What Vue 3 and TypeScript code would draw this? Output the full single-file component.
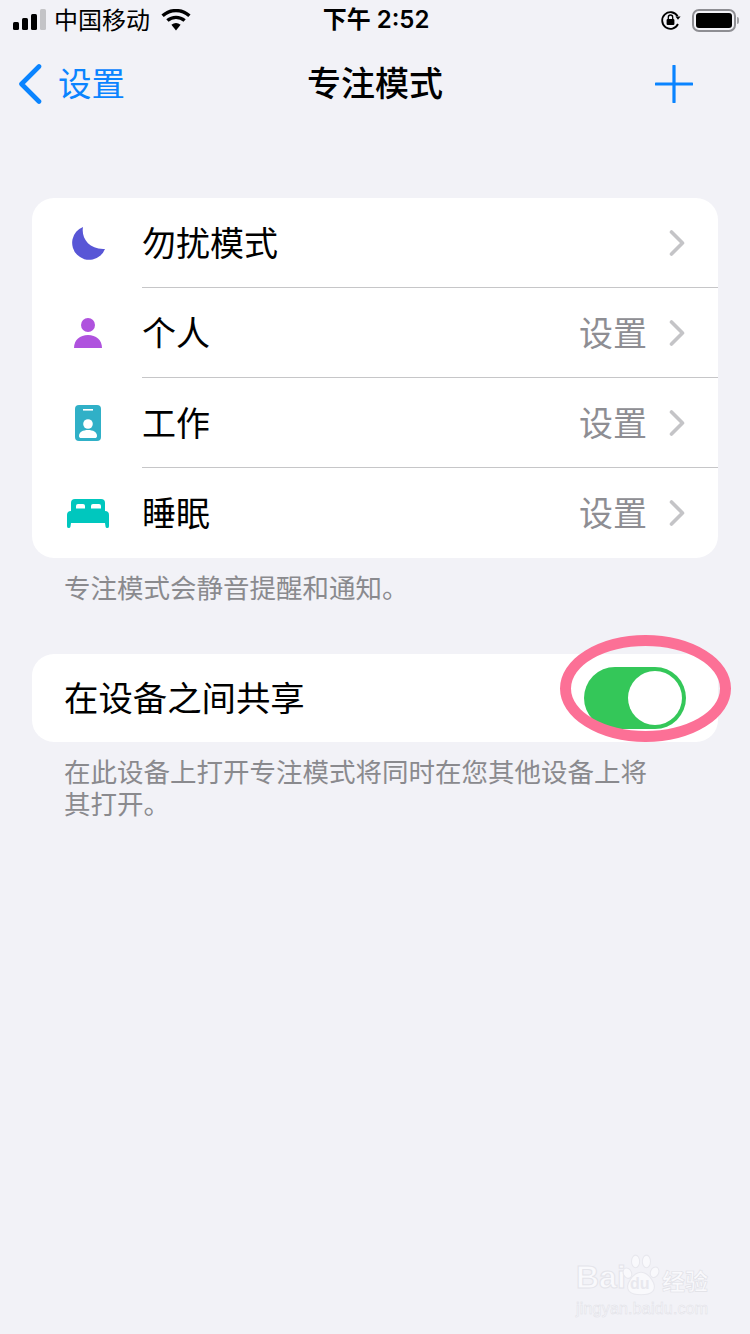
<script setup lang="ts">
interface Focus {
  key: string
  label: string
  value?: string
}

const focusModes: Focus[] = [
  { key: 'moon', label: '勿扰模式' },
  { key: 'person', label: '个人', value: '设置' },
  { key: 'badge', label: '工作', value: '设置' },
  { key: 'bed', label: '睡眠', value: '设置' }
]
</script>

<template>
  <div class="page">
    <header class="status">
      <div class="status-left">
        <svg class="signal" width="33" height="22" viewBox="0 0 33 22">
          <rect x="0" y="13" width="6" height="8" rx="1.5" fill="#000" />
          <rect x="9" y="9" width="6" height="12" rx="1.5" fill="#000" />
          <rect x="18" y="5" width="6" height="16" rx="1.5" fill="#000" />
          <rect x="27" y="0" width="6" height="21" rx="1.5" fill="#c4c4c7" />
        </svg>
        <span class="carrier">中国移动</span>
        <svg class="wifi" width="30" height="22" viewBox="0 0 30 22">
          <path d="M15 21.5 10.4 15.8A7.5 7.5 0 0 1 19.6 15.8Z" fill="#000" />
          <path d="M6.4 11.6A13 13 0 0 1 23.6 11.6" fill="none" stroke="#000" stroke-width="3.4" />
          <path d="M1.6 6.8A19.8 19.8 0 0 1 28.4 6.8" fill="none" stroke="#000" stroke-width="3.4" />
        </svg>
      </div>
      <span class="time">下午 2:52</span>
      <div class="status-right">
        <svg width="22" height="22" viewBox="0 0 22 22">
          <path d="M17.6 7.2A8.3 8.3 0 1 0 18 15" fill="none" stroke="#000" stroke-width="1.8" />
          <path d="M15.4 7.4h5.2l-2.6 3.4Z" fill="#000" />
          <rect x="6.6" y="10" width="7.8" height="6" rx="1" fill="#000" />
          <path d="M8.3 10V8.2a2.2 2.2 0 0 1 4.4 0V10" fill="none" stroke="#000" stroke-width="1.3" />
        </svg>
        <div class="battery">
          <div class="battery-fill"></div>
        </div>
        <div class="battery-tip"></div>
      </div>
    </header>

    <nav class="nav">
      <div class="back">
        <svg width="24" height="40" viewBox="0 0 24 40">
          <path d="M21 2.500 3.500 20 21 37.500" fill="none" stroke="#0a84ff" stroke-width="4.6" stroke-linecap="round" stroke-linejoin="round" />
        </svg>
        <span>设置</span>
      </div>
      <h1 class="title">专注模式</h1>
      <div class="add">
        <svg width="38" height="38" viewBox="0 0 38 38">
          <path d="M19 1V37M1 19H37" stroke="#0a84ff" stroke-width="3.2" stroke-linecap="round" />
        </svg>
      </div>
    </nav>

    <main class="content">
      <section class="card">
        <div v-for="(mode, i) in focusModes" :key="mode.key" class="row">
          <div class="icon">
            <svg width="60" height="60" viewBox="0 0 60 60">
              <path v-if="mode.key === 'moon'" d="M25 14C23 25 31 37 47 36A17 17 0 1 1 25 14Z" fill="#5856d6" />
              <g v-else-if="mode.key === 'person'" fill="#af52de">
                <circle cx="30" cy="22" r="7" />
                <path d="M16 45C16 37 22 32 30 32 38 32 44 37 44 45Z" />
              </g>
              <g v-else-if="mode.key === 'badge'">
                <rect x="17" y="12" width="26" height="36" rx="4" fill="#30b0c7" />
                <rect x="25" y="16" width="10" height="1.6" fill="#fff" />
                <circle cx="30" cy="31" r="4.800" fill="#fff" />
                <path d="M21 43C21 39 25 37 30 37 35 37 39 39 39 43 39 44.500 38 45 37 45H23C22 45 21 44.500 21 43Z" fill="#fff" />
              </g>
              <g v-else>
                <path d="M13 30V20a4 4 0 0 1 4-4H43a4 4 0 0 1 4 4V30Z" fill="#00c7be" />
                <path d="M18 25.500V23a2 2 0 0 1 2-2H25a2 2 0 0 1 2 2V25.500ZM33 25.500V23a2 2 0 0 1 2-2H41a2 2 0 0 1 2 2V25.500Z" fill="#fff" />
                <path d="M9 43a1 1 0 0 0 3.500 .5L13 40H47L47.500 43.500A1 1 0 0 0 51 43V32a4 4 0 0 0-4-4H13a4 4 0 0 0-4 4Z" fill="#00c7be" />
              </g>
            </svg>
          </div>
          <div class="row-main" :class="{ last: i === focusModes.length - 1 }">
            <span class="label">{{ mode.label }}</span>
            <span v-if="mode.value" class="value">{{ mode.value }}</span>
            <svg class="chevron" width="16" height="26" viewBox="0 0 16 26">
              <path d="M2.500 2 13.500 13 2.500 24" fill="none" stroke="#c4c4c7" stroke-width="3.6" stroke-linecap="round" stroke-linejoin="round" />
            </svg>
          </div>
        </div>
      </section>
      <p class="note">专注模式会静音提醒和通知。</p>

      <section class="card share">
        <span class="label">在设备之间共享</span>
        <div class="toggle">
          <div class="knob"></div>
        </div>
      </section>
      <p class="note note-wide">在此设备上打开专注模式将同时在您其他设备上将其打开。</p>
    </main>

    <div class="circle-mark"></div>

    <div class="watermark">
      <div class="wm-top">
        <span class="wm-bai">Bai</span>
        <div class="wm-paw">
          <svg width="38" height="44" viewBox="0 0 42 46">
            <g fill="#f9f9fc" stroke="#e8e8ee" stroke-width="1.200">
              <ellipse cx="6" cy="21" rx="4.500" ry="6" transform="rotate(-25 6 21)" />
              <ellipse cx="15" cy="8" rx="4.500" ry="7" />
              <ellipse cx="27" cy="8" rx="4.500" ry="7" />
              <ellipse cx="36" cy="20" rx="4.500" ry="6" transform="rotate(25 36 20)" />
              <path d="M21 20C29 20 40 34 34 41 29 46 13 46 8 41 2 34 13 20 21 20Z" />
            </g>
          </svg>
          <span class="wm-du">du</span>
        </div>
        <span class="wm-cn">经验</span>
      </div>
      <span class="wm-url">jingyan.baidu.com</span>
    </div>
  </div>
</template>

<style scoped>
.page {
  position: relative;
  width: 750px;
  height: 1334px;
  overflow: hidden;
  background: #f2f2f7;
  color: #000;
  font-family: "Noto Sans CJK SC", "Liberation Sans", sans-serif;
}

.status {
  display: grid;
  grid-template-columns: 1fr auto 1fr;
  align-items: center;
  height: 40px;
  padding: 0 11px 0 13px;
}
.status-left {
  display: flex;
  align-items: center;
}
.signal {
  margin-right: 8px;
}
.carrier {
  margin-bottom: 2px;
  font-size: 24px;
  line-height: 38px;
}
.wifi {
  margin-left: 11px;
}
.time {
  font-family: Inter, "Noto Sans CJK SC", sans-serif;
  font-size: 24px;
  font-weight: 600;
  line-height: 40px;
}
.status-right {
  display: flex;
  align-items: center;
  justify-content: flex-end;
}
.battery {
  margin-left: 10px;
  width: 44px;
  height: 23px;
  padding: 2px;
  box-sizing: border-box;
  border: 2px solid #8e8e93;
  border-radius: 7px;
}
.battery-fill {
  width: 100%;
  height: 100%;
  background: #000;
  border-radius: 3px;
}
.battery-tip {
  width: 2px;
  height: 7px;
  margin-left: 1px;
  background: #a0a0a4;
  border-radius: 0 2px 2px 0;
}

.nav {
  display: grid;
  grid-template-columns: 1fr auto 1fr;
  align-items: center;
  height: 88px;
  padding: 0 18px;
}
.back {
  display: flex;
  align-items: center;
  gap: 16px;
  color: #0a84ff;
  font-size: 33.500px;
  line-height: 40px;
}
.back span {
  margin-bottom: 4px;
}
.title {
  margin: 0 0 4px;
  font-size: 34px;
  font-weight: 500;
  line-height: 40px;
}
.add {
  display: flex;
  justify-content: flex-end;
  padding-right: 39px;
}

.content {
  padding: 70px 32px 0;
}
.card {
  background: #fff;
  border-radius: 22px;
  overflow: hidden;
}
.row {
  display: flex;
  height: 90px;
}
.icon {
  flex: 0 0 110px;
  display: flex;
  align-items: center;
  padding-left: 26px;
  box-sizing: border-box;
}
.row-main {
  flex: 1;
  display: flex;
  align-items: center;
  padding-right: 33px;
  border-bottom: 1px solid #c6c6c8;
}
.row-main.last {
  border-bottom: none;
}
.label {
  flex: 1;
  margin-bottom: 2px;
  font-size: 34px;
  line-height: 44px;
}
.value {
  margin: 0 22px 2px 0;
  color: #8e8e93;
  font-size: 34px;
  line-height: 44px;
}
.note {
  margin: 13px 0 51px;
  padding-left: 32px;
  width: 600px;
  color: #8a8a8e;
  font-size: 26.500px;
  line-height: 32px;
}
.note-wide {
  margin-top: 13px;
}
.share {
  display: flex;
  align-items: center;
  height: 88px;
  padding: 0 32px;
}
.share .label {
  margin-bottom: 4px;
  font-size: 34.400px;
}
.toggle {
  width: 102px;
  height: 62px;
  padding: 4px;
  box-sizing: border-box;
  display: flex;
  justify-content: flex-end;
  background: #34c759;
  border-radius: 31px;
}
.knob {
  width: 54px;
  height: 54px;
  background: #fff;
  border-radius: 50%;
}

/* hand-drawn annotation over the toggle */
.circle-mark {
  position: absolute;
  left: 560px;
  top: 635px;
  width: 171px;
  height: 107px;
  box-sizing: border-box;
  border: 11px solid #fc7096;
  border-radius: 50%;
}

.watermark {
  position: absolute;
  left: 576px;
  top: 1253px;
  width: 134px;
  display: flex;
  flex-direction: column;
}
.wm-top {
  display: flex;
  align-items: flex-end;
  height: 46px;
}
.wm-bai {
  width: 46px;
  color: #f9f9fc;
  font-family: "Liberation Sans", sans-serif;
  font-size: 32px;
  font-weight: 700;
  line-height: 44px;
  -webkit-text-stroke: 1px #e4e4ea;
}
.wm-paw {
  position: relative;
  width: 40px;
  height: 46px;
}
.wm-du {
  position: absolute;
  left: 8px;
  top: 21px;
  color: #e8e8ee;
  font-family: "Liberation Sans", sans-serif;
  font-size: 16px;
  font-weight: 700;
  line-height: 20px;
}
.wm-cn {
  margin-bottom: 4px;
  color: #f9f9fc;
  font-size: 23px;
  font-weight: 700;
  line-height: 30px;
  -webkit-text-stroke: 0.6px #e0e0e6;
}
.wm-url {
  margin-top: 2px;
  color: #f9f9fc;
  font-family: "Liberation Sans", sans-serif;
  font-size: 16px;
  line-height: 16px;
  letter-spacing: 0.2px;
  white-space: nowrap;
  -webkit-text-stroke: 0.5px #e0e0e6;
}
</style>
